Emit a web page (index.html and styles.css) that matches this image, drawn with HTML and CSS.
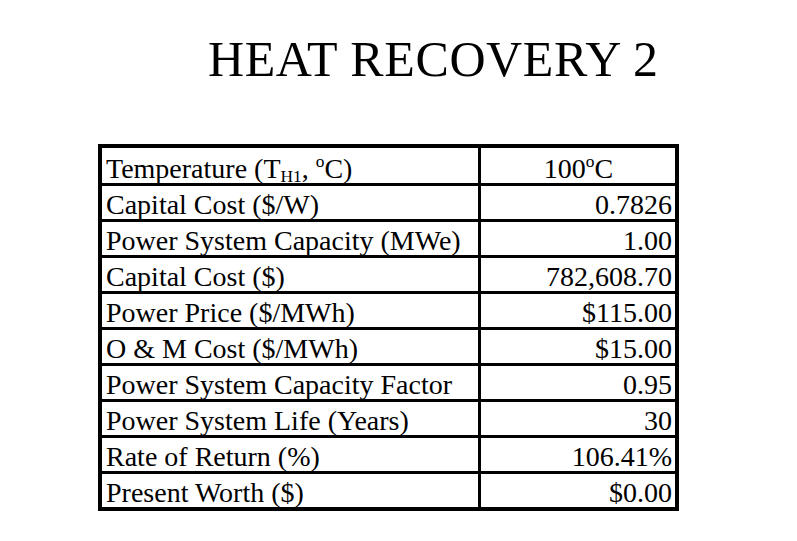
FILE: index.html
```html
<!DOCTYPE html>
<html>
<head>
<meta charset="utf-8">
<link rel="stylesheet" href="styles.css">
</head>
<body>
<h1 class="title">HEAT RECOVERY 2</h1>
<table class="data">
<tr class="first"><td class="label">Temperature (T<sub>H1</sub>, <sup>o</sup>C)</td><td class="val center">100<sup>o</sup>C</td></tr>
<tr><td class="label">Capital Cost ($/W)</td><td class="val">0.7826</td></tr>
<tr><td class="label">Power System Capacity (MWe)</td><td class="val">1.00</td></tr>
<tr><td class="label">Capital Cost ($)</td><td class="val">782,608.70</td></tr>
<tr><td class="label">Power Price ($/MWh)</td><td class="val">$115.00</td></tr>
<tr><td class="label">O &amp; M Cost ($/MWh)</td><td class="val">$15.00</td></tr>
<tr><td class="label">Power System Capacity Factor</td><td class="val">0.95</td></tr>
<tr><td class="label">Power System Life (Years)</td><td class="val">30</td></tr>
<tr><td class="label">Rate of Return (%)</td><td class="val">106.41%</td></tr>
<tr><td class="label">Present Worth ($)</td><td class="val">$0.00</td></tr>
</table>
</body>
</html>
```
FILE: styles.css
```css
html, body {
  margin: 0;
  padding: 0;
  background: #fff;
}
body {
  font-family: "Liberation Serif", "Times New Roman", serif;
  color: #000;
}
.title {
  margin: 32px 0 0 0;
  padding-left: 208px;
  font-size: 50px;
  letter-spacing: 0.6px;
  font-weight: normal;
  line-height: 54px;
  height: 54px;
}
.data {
  margin: 58px 0 0 98px;
  border-collapse: collapse;
  border: 4px solid #000;
  font-size: 28px;
}
.data td {
  border: 3px solid #000;
  height: 29px;
  line-height: 29px;
  padding: 4px 3px 0 4px;
  white-space: nowrap;
}
.data .first td {
  height: 29px;
  padding-top: 6px;
}
.label {
  width: 369px;
  text-align: left;
}
.val {
  width: 187px;
  text-align: right;
}
.val.center {
  text-align: center;
}
sub, sup {
  font-size: 0.62em;
  line-height: 0;
}
sub {
  vertical-align: -0.22em;
}
sup {
  vertical-align: 0.62em;
}
```
